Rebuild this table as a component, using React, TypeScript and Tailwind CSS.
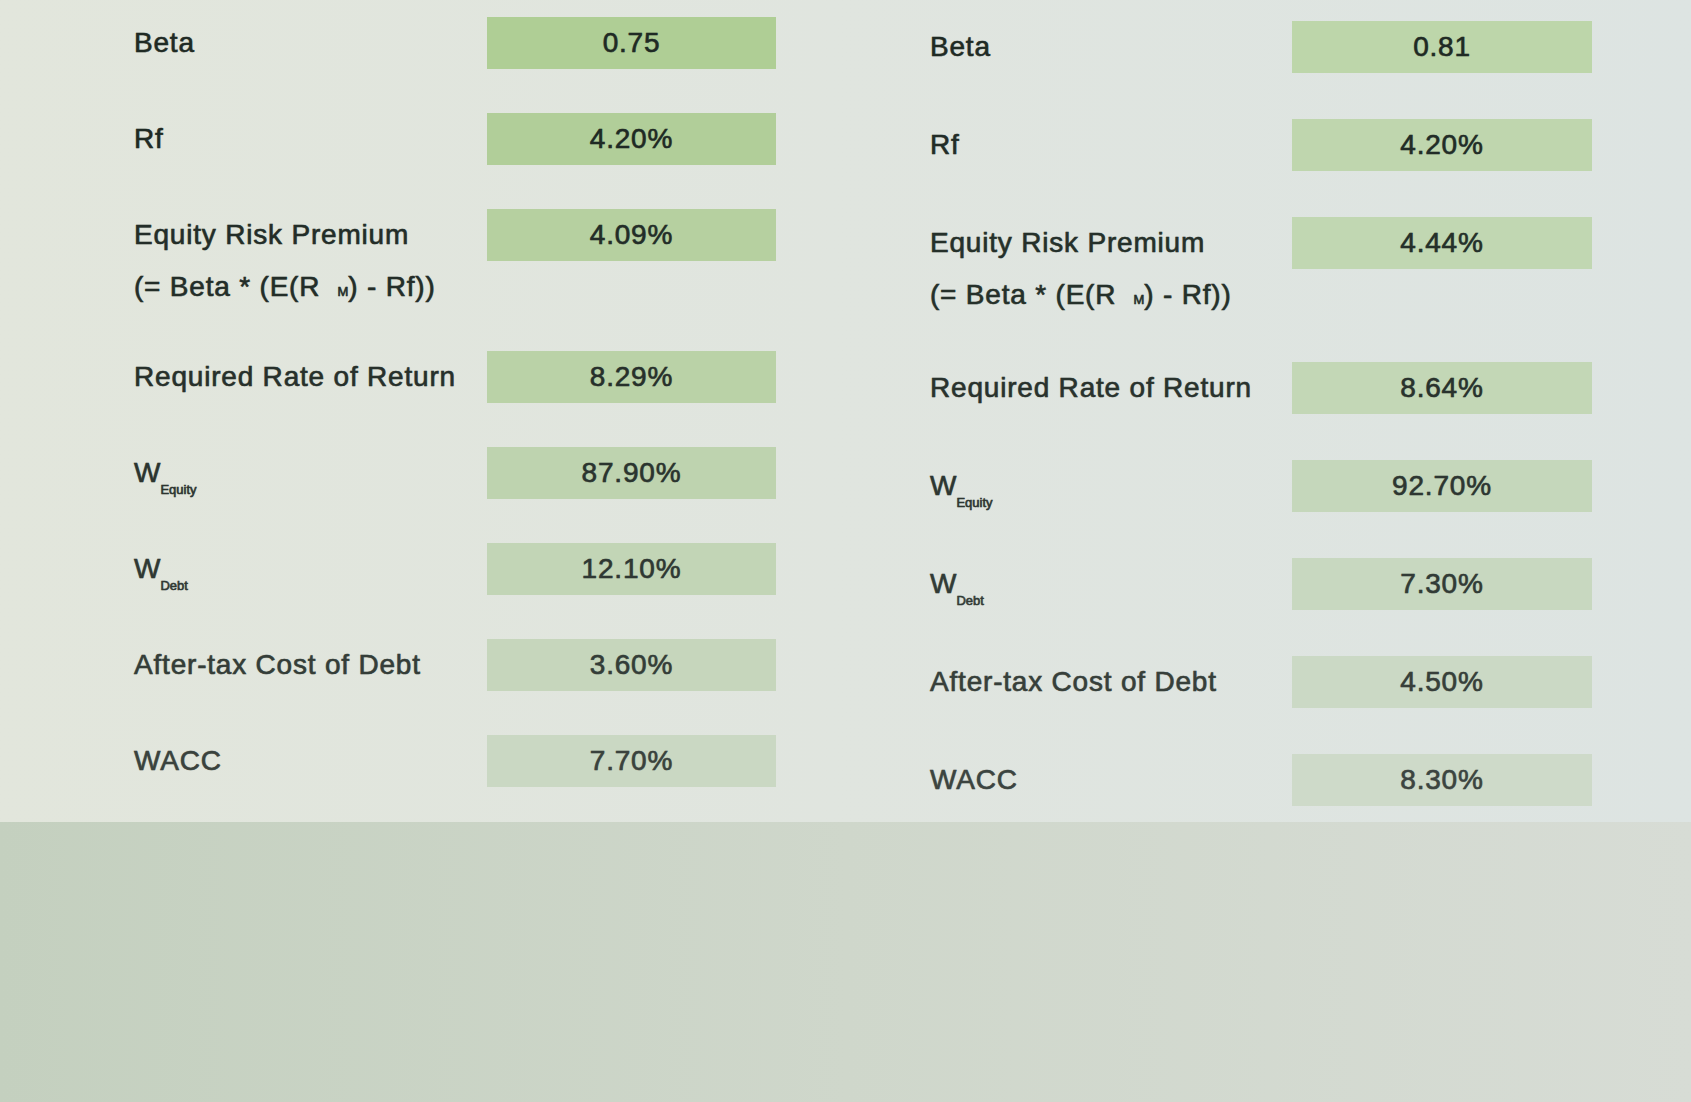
import React from "react";

type Row = {
  label: React.ReactNode;
  value: string;
  cell: string;
  text: string;
  tall?: boolean;
};

const font = { fontFamily: '"Liberation Sans", Arial, sans-serif' };

function Sub({ main, sub }: { main: string; sub: string }) {
  return (
    <span className="inline-flex items-end">
      <span className="tracking-normal">{main}</span>
      <span className="text-[13px] leading-[13px] -mb-[2px] tracking-normal">{sub}</span>
    </span>
  );
}

function Erp() {
  return (
    <span className="flex flex-col">
      <span className="h-[52px] flex items-center">Equity Risk Premium</span>
      <span className="h-[52px] flex items-center">
        (= Beta * (E(R&nbsp;&nbsp;<span className="text-[13px] self-end mb-[12px] tracking-normal">M</span>) - Rf))
      </span>
    </span>
  );
}

const leftRows: Row[] = [
  { label: "Beta", value: "0.75", cell: "bg-[#afce95]", text: "text-[#1f2a24]" },
  { label: "Rf", value: "4.20%", cell: "bg-[#b1ce99]", text: "text-[#1f2a24]" },
  { label: <Erp />, value: "4.09%", cell: "bg-[#b6d0a0]", text: "text-[#232d28]", tall: true },
  { label: "Required Rate of Return", value: "8.29%", cell: "bg-[#bad2a7]", text: "text-[#27302b]" },
  { label: <Sub main="W" sub="Equity" />, value: "87.90%", cell: "bg-[#bed3af]", text: "text-[#2b342f]" },
  { label: <Sub main="W" sub="Debt" />, value: "12.10%", cell: "bg-[#c2d5b6]", text: "text-[#2f3833]" },
  { label: "After-tax Cost of Debt", value: "3.60%", cell: "bg-[#c6d6bc]", text: "text-[#343d38]" },
  { label: "WACC", value: "7.70%", cell: "bg-[#cad8c3]", text: "text-[#3a423d]" },
];

const rightRows: Row[] = [
  { label: "Beta", value: "0.81", cell: "bg-[#bdd6aa]", text: "text-[#1f2a24]" },
  { label: "Rf", value: "4.20%", cell: "bg-[#bfd6ae]", text: "text-[#222c27]" },
  { label: <Erp />, value: "4.44%", cell: "bg-[#c1d7b2]", text: "text-[#25302a]", tall: true },
  { label: "Required Rate of Return", value: "8.64%", cell: "bg-[#c3d7b6]", text: "text-[#29322d]" },
  { label: <Sub main="W" sub="Equity" />, value: "92.70%", cell: "bg-[#c5d7bb]", text: "text-[#2d3631]" },
  { label: <Sub main="W" sub="Debt" />, value: "7.30%", cell: "bg-[#c8d8c0]", text: "text-[#323b36]" },
  { label: "After-tax Cost of Debt", value: "4.50%", cell: "bg-[#cbd9c5]", text: "text-[#373f3a]" },
  { label: "WACC", value: "8.30%", cell: "bg-[#cedac9]", text: "text-[#3c4440]" },
];

function Column({
  rows,
  labelW,
  boxW,
  gap,
  tallGap,
}: {
  rows: Row[];
  labelW: string;
  boxW: string;
  gap: string;
  tallGap: string;
}) {
  return (
    <div className="flex flex-col">
      {rows.map((r, i) => (
        <div key={i} className={`flex items-start ${r.tall ? tallGap : gap}`}>
          <div className={`${labelW} ${r.tall ? "" : "h-[52px] flex items-center"} ${r.text}`}>{r.label}</div>
          <div className={`${boxW} h-[52px] flex items-center justify-center ${r.cell} ${r.text}`}>{r.value}</div>
        </div>
      ))}
    </div>
  );
}

export default function App() {
  return (
    <div
      className="w-[1691px] h-[1102px] overflow-hidden flex flex-col bg-gradient-to-r from-[#e2e6dc] via-[#e0e5df] to-[#dde4e2] text-[28px] tracking-[0.8px] [-webkit-text-stroke:0.5px_currentColor] [text-shadow:0_0_1px_rgba(30,40,35,0.5)]"
      style={font}
    >
      <div className="h-[822px] flex">
        <div className="pl-[134px] pt-[17px] w-[930px]">
          <Column
            rows={leftRows}
            labelW="w-[353px]"
            boxW="w-[289px]"
            gap="mb-[44px]"
            tallGap="mb-[38px]"
          />
        </div>
        <div className="pt-[21px]">
          <Column
            rows={rightRows}
            labelW="w-[362px]"
            boxW="w-[300px]"
            gap="mb-[46px]"
            tallGap="mb-[41px]"
          />
        </div>
      </div>
      <div className="flex-1 bg-gradient-to-r from-[#c4d0bf] via-[#cfd7cb] to-[#d7dcd5]" />
    </div>
  );
}
